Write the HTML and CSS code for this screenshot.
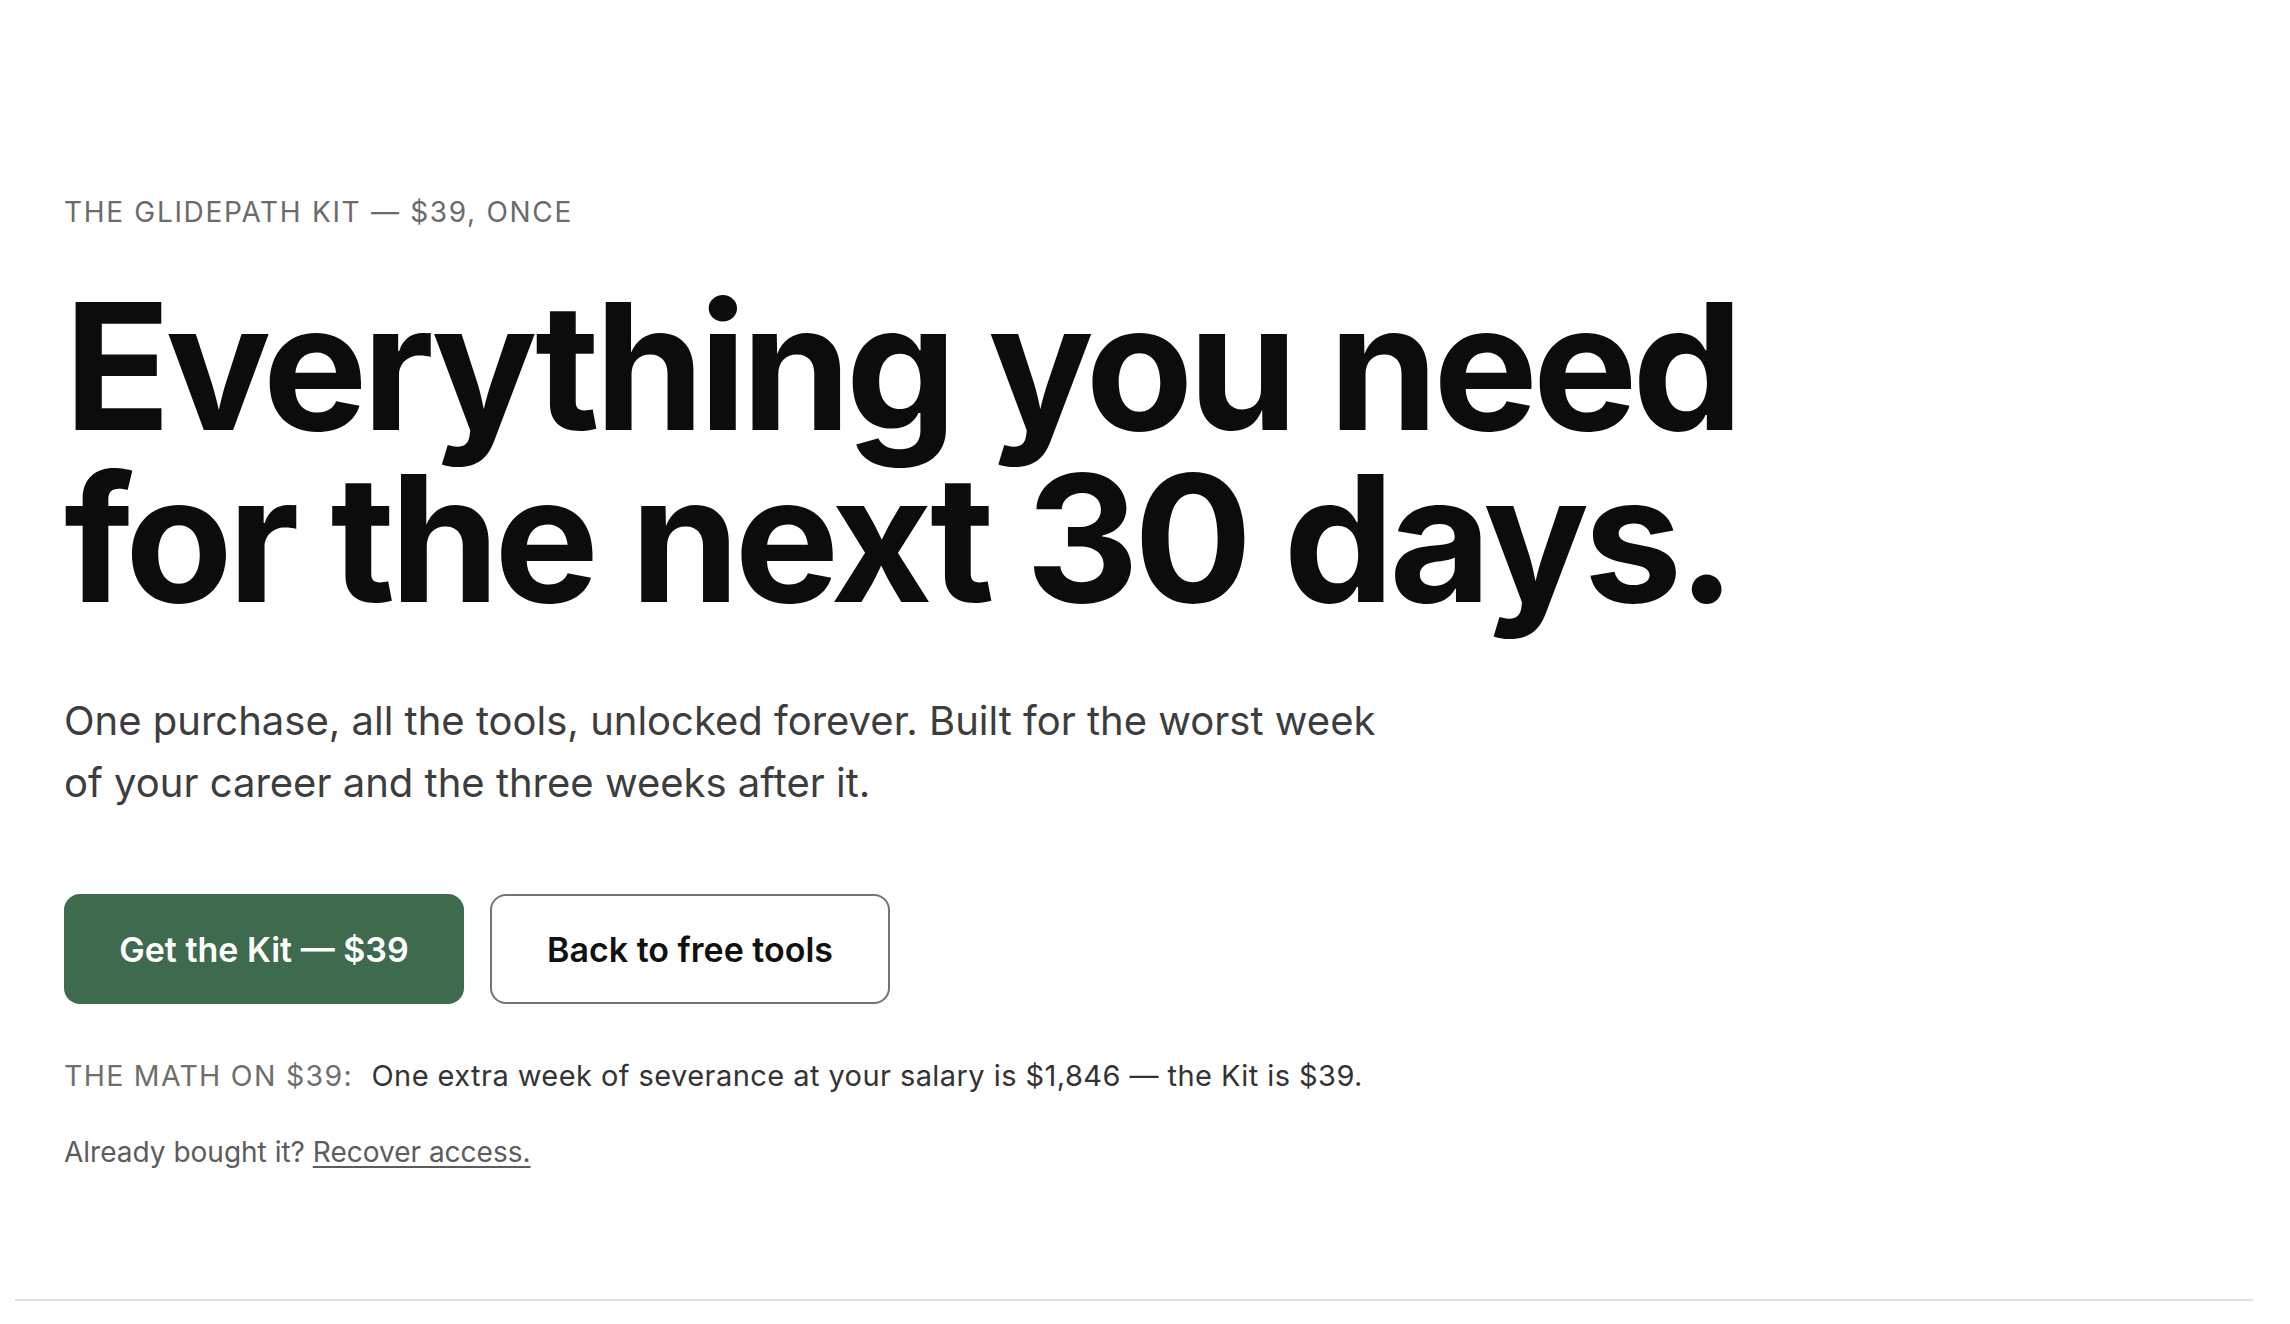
FILE: index.html
```html
<!DOCTYPE html>
<html lang="en">
<head>
<meta charset="utf-8">
<title>The Glidepath Kit</title>
<link rel="stylesheet" href="styles.css">
</head>
<body>
<main class="hero">
  <p class="eyebrow">The Glidepath Kit — $39, once</p>
  <h1 class="headline">Everything you need<br>for the next 30 days.</h1>
  <p class="lede">One purchase, all the tools, unlocked forever. Built for the worst week of your career and the three weeks after it.</p>
  <div class="actions">
    <a class="btn btn-primary" href="#">Get the Kit — $39</a>
    <a class="btn btn-secondary" href="#">Back to free tools</a>
  </div>
  <p class="math"><span class="math-label">The math on $39:</span> One extra week of severance at your salary is $1,846 — the Kit is $39.</p>
  <p class="recover">Already bought it? <a href="#">Recover access.</a></p>
</main>
<hr class="divider">
</body>
</html>
```
FILE: styles.css
```css
html, body {
  margin: 0;
  padding: 0;
  background: #ffffff;
}
body {
  font-family: Inter, "Noto Sans", sans-serif;
  color: #111111;
}
.hero {
  padding: 194px 64px 0 64px;
}
.eyebrow {
  margin: 0;
  font-size: 28px;
  line-height: 36px;
  letter-spacing: 0.06em;
  text-transform: uppercase;
  color: #6b6b6b;
  font-weight: 400;
}
.headline {
  margin: 50px 0 0 0;
  font-size: 176px;
  line-height: 172px;
  font-weight: 700;
  letter-spacing: -0.03em;
  color: #0c0c0c;
}
.lede {
  margin: 66px 0 0 0;
  max-width: 1335px;
  font-size: 40px;
  line-height: 62px;
  color: #3d3d3d;
}
.actions {
  display: flex;
  gap: 26px;
  margin-top: 80px;
}
.btn {
  display: flex;
  align-items: center;
  justify-content: center;
  box-sizing: border-box;
  width: 400px;
  height: 110px;
  border-radius: 16px;
  font-size: 34px;
  font-weight: 600;
  text-decoration: none;
}
.btn-primary {
  background: #3e6b4e;
  color: #ffffff;
}
.btn-secondary {
  background: #ffffff;
  color: #111111;
  border: 2px solid #747474;
}
.math {
  margin: 52px 0 0 0;
  font-size: 29px;
  line-height: 40px;
  letter-spacing: 0.015em;
  color: #333333;
}
.math-label {
  font-size: 28.5px;
  text-transform: uppercase;
  letter-spacing: 0.045em;
  color: #6e6e6e;
  margin-right: 10px;
}
.recover {
  margin: 36px 0 0 0;
  font-size: 28px;
  line-height: 40px;
  color: #5c5c5c;
}
.recover a {
  color: #5c5c5c;
  text-decoration: underline;
  text-decoration-thickness: 2px;
  text-underline-offset: 4px;
}
.divider {
  margin: 127px 37px 0 15px;
  border: 0;
  border-top: 2px solid #e0e0e0;
}
```
